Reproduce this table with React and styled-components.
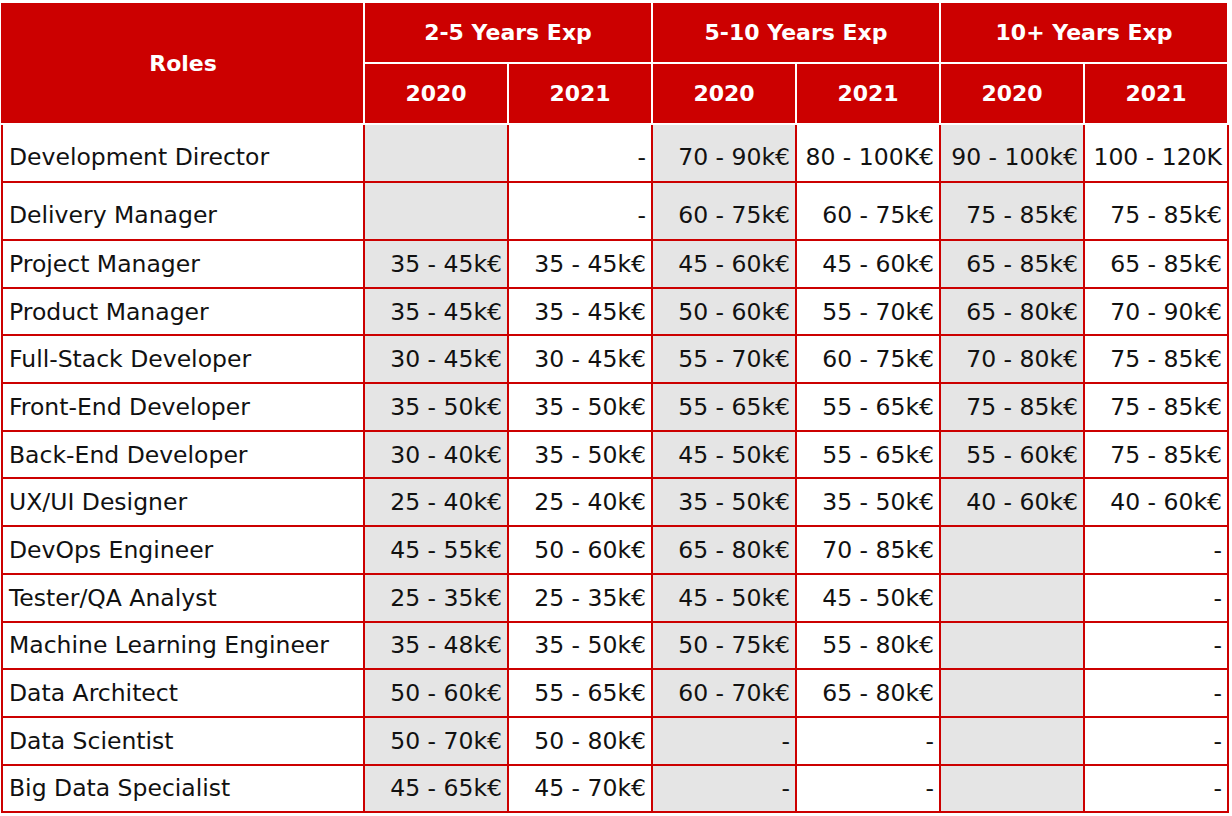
import React from "react";
import styled, { createGlobalStyle } from "styled-components";

const GlobalStyle = createGlobalStyle`
  html, body {
    margin: 0;
    padding: 0;
    background: #fff;
  }
`;

const RED = "#cc0000";

const Table = styled.table`
  border-collapse: collapse;
  table-layout: fixed;
  width: 1226px;
  margin: 1px 0 0 1px;
  font-family: "DejaVu Sans", "Liberation Sans", sans-serif;
  color: #111;
`;

const HeadCell = styled.th`
  background: ${RED};
  color: #fff;
  border: 2px solid #fff;
  font-size: 22px;
  font-weight: 700;
  text-align: center;
  vertical-align: middle;
  height: 59px;
  padding: 0;
  &:first-child {
    border-left-color: ${RED};
  }
`;

const Row = styled.tr`
  height: ${(p) => (p.$tall ? "58px" : "47.7px")};
`;

const Cell = styled.td`
  border: 2px solid ${RED};
  background: ${(p) => (p.$shade ? "#e5e5e5" : "#fff")};
  text-align: ${(p) => (p.$role ? "left" : "right")};
  padding: ${(p) => (p.$tall ? "8px" : "0")} 5px 0 6px;
  font-size: 23.5px;
  white-space: nowrap;
  overflow: hidden;
  vertical-align: middle;
`;

const groups = ["2-5 Years Exp", "5-10 Years Exp", "10+ Years Exp"];

const rows = [
  ["Development Director", "", "-", "70 - 90k€", "80 - 100K€", "90 - 100k€", "100 - 120K"],
  ["Delivery Manager", "", "-", "60 - 75k€", "60 - 75k€", "75 - 85k€", "75 - 85k€"],
  ["Project Manager", "35 - 45k€", "35 - 45k€", "45 - 60k€", "45 - 60k€", "65 - 85k€", "65 - 85k€"],
  ["Product Manager", "35 - 45k€", "35 - 45k€", "50 - 60k€", "55 - 70k€", "65 - 80k€", "70 - 90k€"],
  ["Full-Stack Developer", "30 - 45k€", "30 - 45k€", "55 - 70k€", "60 - 75k€", "70 - 80k€", "75 - 85k€"],
  ["Front-End Developer", "35 - 50k€", "35 - 50k€", "55 - 65k€", "55 - 65k€", "75 - 85k€", "75 - 85k€"],
  ["Back-End Developer", "30 - 40k€", "35 - 50k€", "45 - 50k€", "55 - 65k€", "55 - 60k€", "75 - 85k€"],
  ["UX/UI Designer", "25 - 40k€", "25 - 40k€", "35 - 50k€", "35 - 50k€", "40 - 60k€", "40 - 60k€"],
  ["DevOps Engineer", "45 - 55k€", "50 - 60k€", "65 - 80k€", "70 - 85k€", "", "-"],
  ["Tester/QA Analyst", "25 - 35k€", "25 - 35k€", "45 - 50k€", "45 - 50k€", "", "-"],
  ["Machine Learning Engineer", "35 - 48k€", "35 - 50k€", "50 - 75k€", "55 - 80k€", "", "-"],
  ["Data Architect", "50 - 60k€", "55 - 65k€", "60 - 70k€", "65 - 80k€", "", "-"],
  ["Data Scientist", "50 - 70k€", "50 - 80k€", "-", "-", "", "-"],
  ["Big Data Specialist", "45 - 65k€", "45 - 70k€", "-", "-", "", "-"],
];

export default function App() {
  return (
    <>
      <GlobalStyle />
      <Table>
        <colgroup>
          <col style={{ width: 362 }} />
          {[0, 1, 2, 3, 4, 5].map((i) => (
            <col key={i} style={{ width: 144 }} />
          ))}
        </colgroup>
        <thead>
          <tr>
            <HeadCell rowSpan={2}>Roles</HeadCell>
            {groups.map((g) => (
              <HeadCell key={g} colSpan={2}>
                {g}
              </HeadCell>
            ))}
          </tr>
          <tr>
            {groups.map((g) => (
              <React.Fragment key={g}>
                <HeadCell>2020</HeadCell>
                <HeadCell>2021</HeadCell>
              </React.Fragment>
            ))}
          </tr>
        </thead>
        <tbody>
          {rows.map((r, ri) => {
            const tall = ri < 2;
            return (
              <Row key={r[0]} $tall={tall}>
                {r.map((v, ci) => (
                  <Cell
                    key={ci}
                    $role={ci === 0}
                    $shade={ci % 2 === 1}
                    $tall={tall}
                  >
                    {v}
                  </Cell>
                ))}
              </Row>
            );
          })}
        </tbody>
      </Table>
    </>
  );
}
